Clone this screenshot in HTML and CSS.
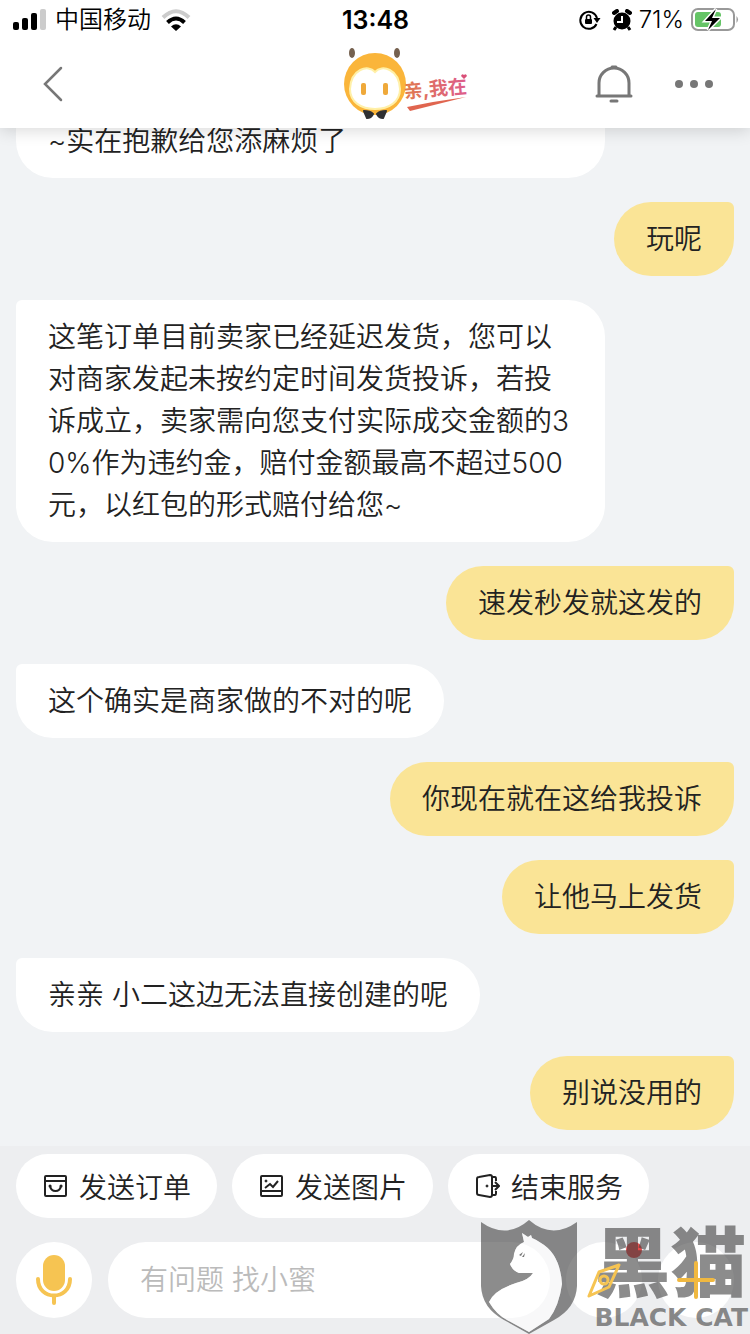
FILE: index.html
```html
<!DOCTYPE html>
<html lang="zh-CN">
<head>
    <meta charset="UTF-8">
    <meta name="viewport" content="width=device-width, initial-scale=1.0">
    <title>亲,我在</title>
    <link rel="stylesheet" href="styles.css">
</head>
<body>
    <header class="header">
        <!-- Status bar -->
        <div class="status-bar">
            <div class="status-left">
                <svg width="34" height="22" viewBox="0 0 34 22">
                    <rect x="1" y="13" width="6" height="8" rx="2"/>
                    <rect x="10" y="9" width="6" height="12" rx="2"/>
                    <rect x="19" y="4" width="6" height="17" rx="2"/>
                    <rect x="28" y="0" width="6" height="21" rx="2" fill="#ccc"/>
                </svg>
                <span>中国移动</span>
                <svg width="32" height="22" viewBox="0 0 32 22" fill="none" stroke-width="4">
                    <path d="M3 8.500Q16 -4 29 8.500" stroke="#ccc"/>
                    <path d="M7.500 13.500Q16 5.500 24.500 13.500" stroke="#000"/>
                    <path d="M11 17.500Q16 13 21 17.500L16 22z" fill="#000"/>
                </svg>
            </div>
            <span class="clock">13:48</span>
            <div class="status-right">
                <svg class="lock-icon" width="22" height="20" viewBox="0 0 22 20">
                    <path d="M17.500 14A8.500 8.500 0 1 1 18 8" fill="none" stroke="#000" stroke-width="2"/>
                    <path d="M14.500 8h7l-3.500 5z"/>
                    <rect x="6" y="9" width="7" height="5" rx="1"/>
                    <path d="M7.500 9V7a2 2 0 0 1 4 0v2" fill="none" stroke="#000" stroke-width="1.500"/>
                </svg>
                <svg width="20" height="22" viewBox="0 0 20 22">
                    <circle cx="10" cy="12" r="8.500"/>
                    <path d="M2 4l3-2M18 4l-3-2" stroke="#000" stroke-width="4" stroke-linecap="round"/>
                    <path d="M4 18l-2 3M16 18l2 3" stroke="#000" stroke-width="3"/>
                    <path d="M10 7v6H5" fill="none" stroke="#fff" stroke-width="2"/>
                </svg>
                <span>71%</span>
                <svg width="48" height="24" viewBox="0 0 48 24">
                    <rect x="1" y="1" width="42" height="21" rx="6" fill="#fff" stroke="#999" stroke-width="2"/>
                    <path d="M45.500 8q3 3.500 0 7z" fill="#999"/>
                    <rect x="4" y="4" width="26" height="15" rx="3" fill="#65c466"/>
                    <path class="bolt" d="M25 1L14 13h7l-4 9 12-12h-8z"/>
                </svg>
            </div>
        </div>

        <!-- Navigation -->
        <nav class="nav">
            <button class="icon-btn" aria-label="返回">
                <svg width="22" height="36" viewBox="0 0 22 36" fill="none" stroke="#777" stroke-width="2.500" stroke-linecap="round">
                    <path d="M19 2L3 18l16 16"/>
                </svg>
            </button>
            <div class="brand">
                <svg width="62" height="74" viewBox="0 0 62 74">
                    <ellipse cx="8" cy="6" rx="3" ry="5" fill="#75614f"/>
                    <ellipse cx="53" cy="6" rx="3" ry="5" fill="#75614f"/>
                    <circle cx="31" cy="37" r="31" fill="#fab53a"/>
                    <path d="M31 25C24 17 7 22 6 42c0 13 11 20 25 20s25-7 25-20C55 22 38 17 31 25z" fill="#fff" stroke="#fff0a8" stroke-width="2"/>
                    <rect x="17" y="36" width="5" height="12" rx="2" fill="#efa93a"/>
                    <rect x="39" y="36" width="5" height="12" rx="2" fill="#efa93a"/>
                    <path d="M20 64q6 0 9 3-2 4-6 4zM42 64q-6 0-9 3 2 4 6 4z" fill="#2f3033" stroke="#2f3033" stroke-width="2" stroke-linejoin="round"/>
                </svg>
                <svg class="slogan" width="62" height="40" viewBox="0 0 62 40">
                    <defs>
                        <linearGradient id="warm">
                            <stop offset="0" stop-color="#e07a4c"/>
                            <stop offset="1" stop-color="#dd5c8c"/>
                        </linearGradient>
                    </defs>
                    <text class="slogan-text" x="-4" y="26" fill="url(#warm)" transform="rotate(-5)">亲,我在</text>
                    <path d="M1 35Q30 29 60 25Q32 32 4 39z" fill="#e0654f"/>
                    <path d="M58 7l-3-3q1-3 3-1 2-2 3 1z" fill="#d94f78"/>
                </svg>
            </div>
            <div class="nav-actions">
                <button class="icon-btn" aria-label="通知">
                    <svg width="38" height="38" viewBox="0 0 38 38" fill="none" stroke="#777" stroke-width="3" stroke-linecap="round">
                        <path d="M4 31V18a15 15 0 0 1 30 0v13M2 31h34M16 36h6M17 2h4"/>
                    </svg>
                </button>
                <button class="icon-btn" aria-label="更多">
                    <svg width="38" height="8" viewBox="0 0 38 8" fill="#777">
                        <circle cx="4" cy="4" r="4"/>
                        <circle cx="19" cy="4" r="4"/>
                        <circle cx="34" cy="4" r="4"/>
                    </svg>
                </button>
            </div>
        </nav>
    </header>

    <main class="chat">
        <div class="message message-clipped">~实在抱歉给您添麻烦了</div>
        <div class="message mine">玩呢</div>
        <div class="message">这笔订单目前卖家已经延迟发货，您可以对商家发起未按约定时间发货投诉，若投诉成立，卖家需向您支付实际成交金额的30%作为违约金，赔付金额最高不超过500元，以红包的形式赔付给您~</div>
        <div class="message mine">速发秒发就这发的</div>
        <div class="message">这个确实是商家做的不对的呢</div>
        <div class="message mine">你现在就在这给我投诉</div>
        <div class="message mine">让他马上发货</div>
        <div class="message">亲亲 小二这边无法直接创建的呢</div>
        <div class="message mine">别说没用的</div>
    </main>

    <footer class="composer">
        <div class="shortcuts">
            <button class="shortcut">
                <svg width="24" height="24" viewBox="0 0 24 24" fill="none" stroke="#222" stroke-width="2">
                    <rect x="1" y="2" width="21" height="20" rx="1"/>
                    <path d="M1 7h21M6 12q1 5 5.500 5t5.500-5"/>
                    <path d="M6 12h.100M17 12h.100" stroke-width="3" stroke-linecap="round"/>
                </svg>
                发送订单
            </button>
            <button class="shortcut">
                <svg width="24" height="24" viewBox="0 0 24 24" fill="none" stroke="#222" stroke-width="2">
                    <rect x="1" y="2" width="21" height="20" rx="1"/>
                    <path d="M1 17h21M5 14l5-4 3 3 5-6"/>
                    <circle cx="6" cy="7" r="1" fill="#222" stroke-width="1"/>
                </svg>
                发送图片
            </button>
            <button class="shortcut">
                <svg width="24" height="24" viewBox="0 0 24 24" fill="none" stroke="#222" stroke-width="2">
                    <path d="M1 5q0-2 2-2l11-2q2 0 2 2v18q0 2-2 2L3 21q-2 0-2-2zM16 3h3q1 0 1 2v2M16 21h3q1 0 1-2v-2M16 12h7M19 8l4 4-4 4"/>
                    <circle cx="11" cy="12" r="1" fill="#222" stroke-width="1"/>
                </svg>
                结束服务
            </button>
        </div>
        <div class="input-row">
            <button class="round-btn" aria-label="语音">
                <svg width="36" height="50" viewBox="0 0 36 50">
                    <rect x="7" y="0" width="22" height="36" rx="11" fill="#f6c452"/>
                    <path d="M2 24c0 22 32 22 32 0M18 41v7" fill="none" stroke="#f6c452" stroke-width="4" stroke-linecap="round"/>
                </svg>
            </button>
            <input class="text-box" type="text" placeholder="有问题 找小蜜" aria-label="消息">
            <button class="round-btn" aria-label="发现">
                <svg class="raised" width="36" height="36" viewBox="0 0 36 36" fill="none" stroke="#f6c452" stroke-width="3" stroke-linejoin="round">
                    <path d="M33 3L13 10 3 34l20-9z"/>
                    <circle cx="18" cy="18" r="4"/>
                </svg>
                <span class="dot"></span>
            </button>
            <button class="round-btn" aria-label="添加">
                <svg class="raised" width="38" height="38" viewBox="0 0 38 38" stroke="#f0b840" stroke-width="4" stroke-linecap="round">
                    <path d="M2 19h34M19 2v34"/>
                </svg>
            </button>
        </div>
    </footer>

    <!-- Watermark -->
    <div class="watermark">
        <svg width="98" height="114" viewBox="0 0 98 114">
            <path d="M1 2Q26 20 49 0Q72 20 97 2V66Q96 88 74 100L49 114 24 100Q2 88 1 66zM42 13L44 22Q36 25 34 34Q34 39 30 44Q32 50 39 53L53 53Q49 60 36 63Q14 70 9 82Q16 94 27 100L49 112 69 99Q79 86 82 64Q80 34 61 23Q57 20 52 18L51 15 48 17z" fill="currentColor" fill-rule="evenodd"/>
            <path d="M42 13L44 22Q36 25 34 34Q34 39 30 44Q32 50 39 53L53 53Q49 60 36 63Q14 70 9 82Q16 94 27 100L49 112 69 99Q79 86 82 64Q80 34 61 23Q57 20 52 18L51 15 48 17z" fill="#fff" fill-opacity=".6"/>
            <path d="M39 35l4-3-2 4zM42 37l3-4-1 4z" fill="#777"/>
        </svg>
        <div class="watermark-text">
            <span class="watermark-name">黑猫</span>
            <span class="watermark-latin">BLACK CAT</span>
        </div>
    </div>
</body>
</html>
```
FILE: styles.css
```css
* {
    box-sizing: border-box;
}

body {
    margin: 0;
    height: 100vh;
    display: flex;
    flex-direction: column;
    background: #f1f3f5;
    color: #222;
    font-family: Inter, "Noto Sans CJK SC", sans-serif;
    font-size: 28px;
    font-weight: 350;
    position: relative;
    overflow: hidden;
}

svg {
    display: block;
    flex: none;
}

button {
    border: 0;
    padding: 0;
    font: inherit;
    color: inherit;
    cursor: pointer;
}

/* Header */
.header {
    position: relative;
    z-index: 1;
    background: #fff;
    box-shadow: 0 2px 16px rgba(0, 0, 0, 0.16);
}

.status-bar {
    display: grid;
    grid-template-columns: 1fr auto 1fr;
    align-items: center;
    height: 40px;
    padding: 0 11px 0 12px;
    color: #000;
    font-size: 24px;
    line-height: 40px;
}

.status-left, .status-right {
    display: flex;
    align-items: center;
    gap: 9px;
}

.status-right {
    justify-content: flex-end;
    gap: 7px;
}

.lock-icon {
    margin-right: 4px;
}

.bolt {
    stroke: #fff;
    stroke-width: 3px;
    paint-order: stroke;
}

.clock {
    font-size: 25px;
    font-weight: 600;
}

.nav {
    display: grid;
    grid-template-columns: 1fr auto 1fr;
    align-items: center;
    height: 88px;
    padding: 0 37px 0 42px;
}

.icon-btn {
    background: none;
}

.nav > .icon-btn {
    justify-self: start;
}

.brand {
    display: flex;
    align-items: center;
    padding-left: 56px;
}

.slogan {
    overflow: visible;
    margin-top: 16px;
}

.slogan-text {
    font-size: 19px;
    font-weight: 700;
}

.nav-actions {
    display: flex;
    align-items: center;
    justify-content: flex-end;
    gap: 42px;
}

/* Messages */
.chat {
    flex: 1;
    min-height: 0;
    display: flex;
    flex-direction: column;
    justify-content: flex-end;
    align-items: flex-start;
    gap: 24px;
    padding: 0 16px 16px;
}

.message {
    max-width: 82%;
    padding: 16px 32px;
    background: #fff;
    border-radius: 6px 37px 37px 37px;
    line-height: 42px;
    word-break: break-all;
}

.message-clipped {
    width: 82%;
    border-top-right-radius: 0;
}

.mine {
    align-self: flex-end;
    background: #fae496;
    border-radius: 37px 6px 37px 37px;
}

/* Bottom bar */
.composer {
    padding: 8px 16px 16px;
    background: #edeef0;
}

.shortcuts {
    display: flex;
    gap: 15px;
    margin-bottom: 24px;
}

.shortcut {
    display: flex;
    align-items: center;
    gap: 11px;
    height: 64px;
    padding: 0 26px 0 28px;
    background: #fff;
    border-radius: 32px;
    white-space: nowrap;
}

.input-row {
    display: flex;
    gap: 16px;
}

.round-btn {
    position: relative;
    flex: none;
    display: flex;
    align-items: center;
    justify-content: center;
    width: 76px;
    height: 76px;
    background: #fff;
    border-radius: 50%;
}

.text-box {
    flex: 1;
    min-width: 0;
    height: 76px;
    padding: 0 32px;
    border: 0;
    border-radius: 38px;
    background: #fff;
    color: #222;
    font: inherit;
}

.text-box::placeholder {
    color: #bbb;
}

.dot {
    position: absolute;
    top: 0;
    right: 0;
    width: 16px;
    height: 16px;
    background: #e94b4b;
    border-radius: 50%;
}

/* keeps the yellow icons above the watermark */
.raised {
    position: relative;
    z-index: 3;
}

.watermark {
    position: absolute;
    right: 2px;
    bottom: 0;
    z-index: 2;
    display: flex;
    gap: 16px;
    height: 114px;
    color: rgba(64, 64, 64, 0.6);
    pointer-events: none;
}

.watermark-text {
    display: flex;
    flex-direction: column;
    justify-content: flex-end;
    gap: 8px;
    padding-bottom: 2px;
}

.watermark-name {
    font-family: "Noto Sans CJK SC", sans-serif;
    font-size: 76px;
    line-height: 76px;
    font-weight: 900;
}

.watermark-latin {
    font-family: "DejaVu Sans", sans-serif;
    font-size: 25px;
    line-height: 28px;
    font-weight: 700;
    white-space: nowrap;
}
```
